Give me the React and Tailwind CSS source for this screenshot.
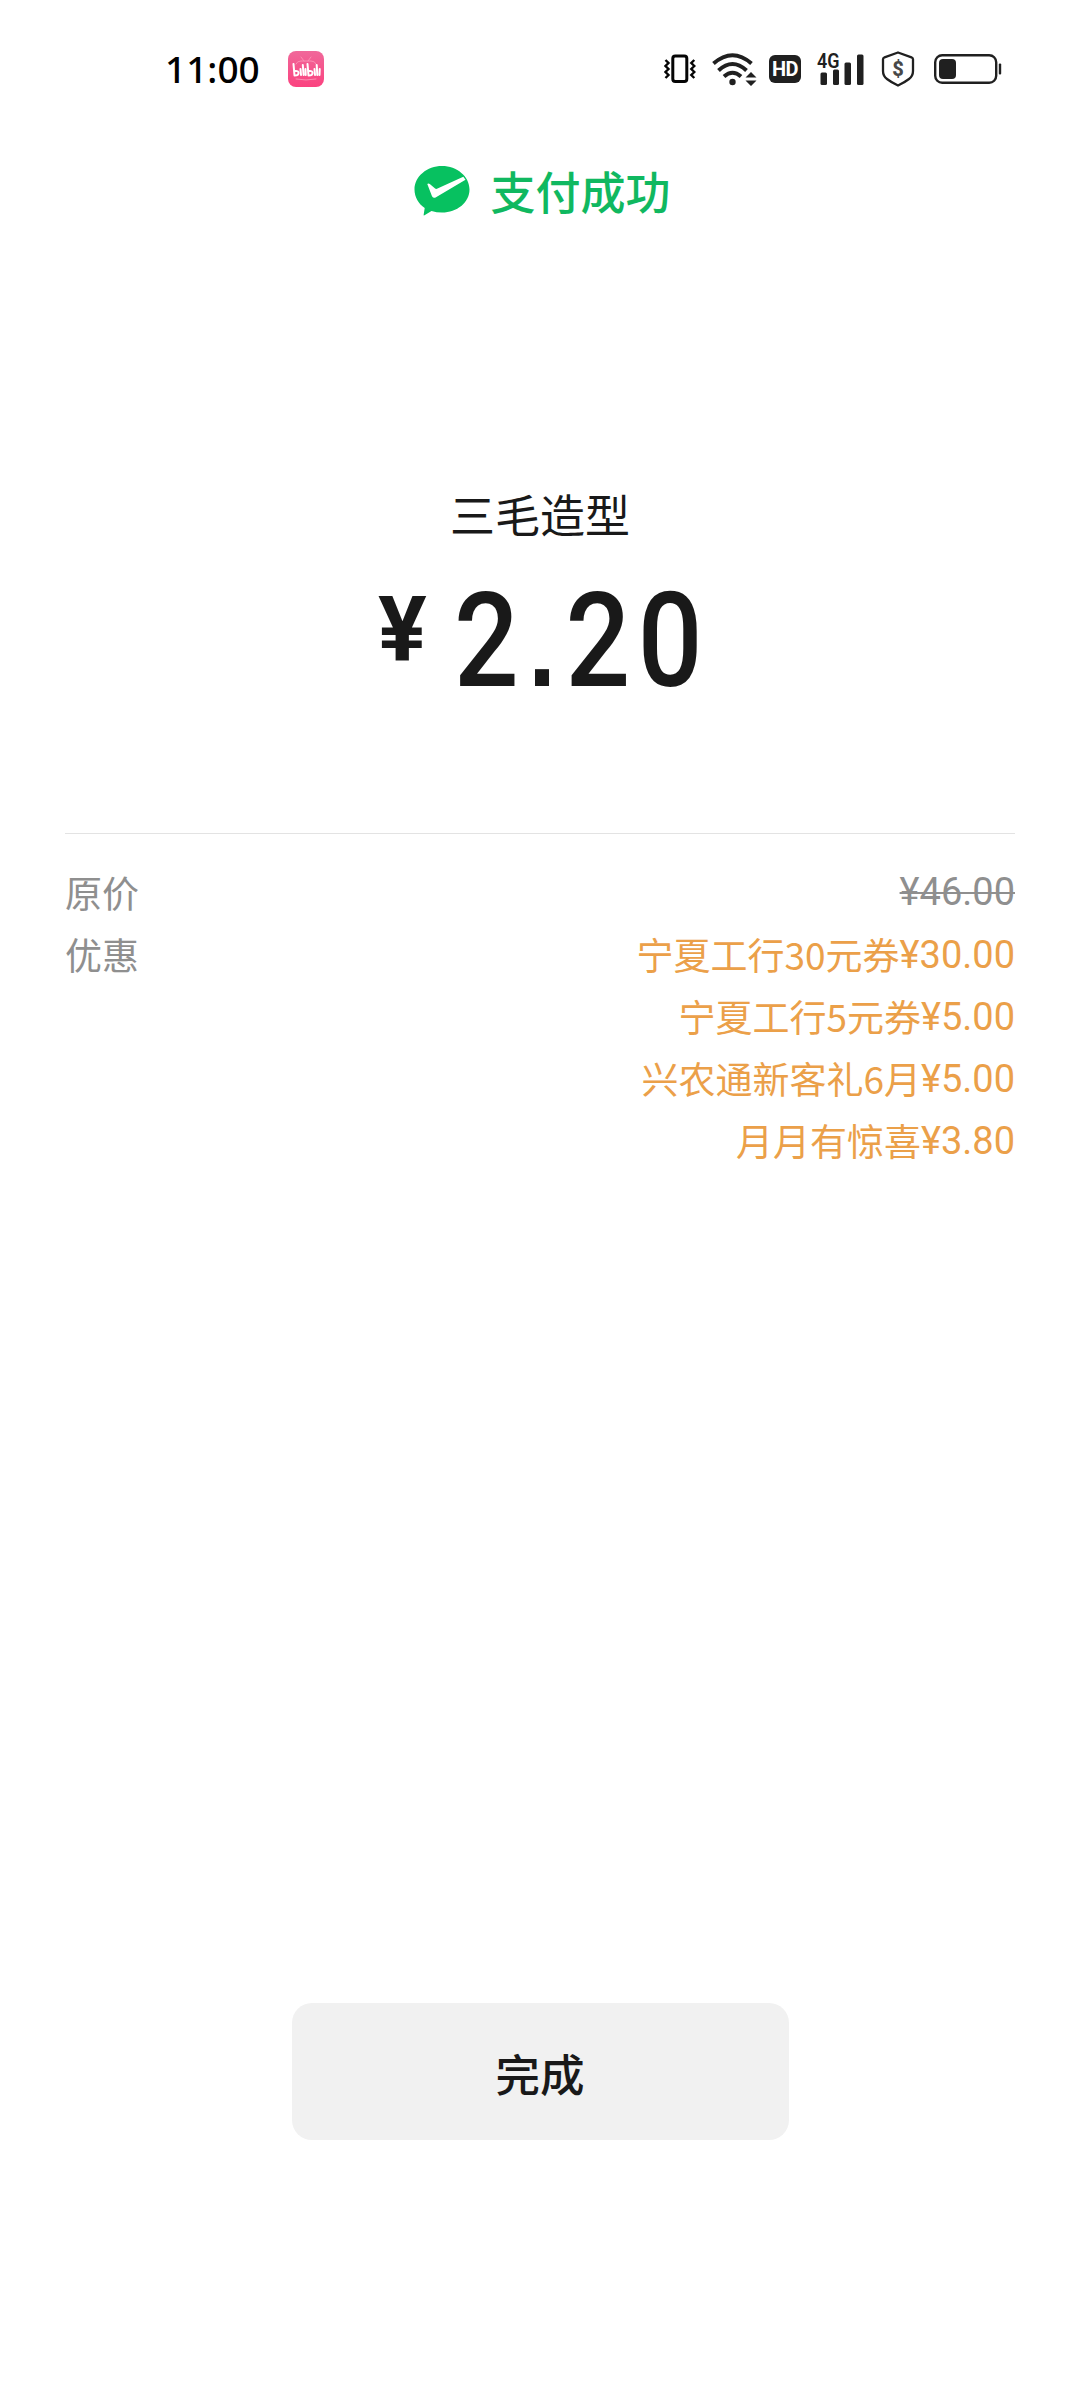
import { Fragment } from "react";

const discounts = [
    { name: "宁夏工行30元券", amount: "30.00" },
    { name: "宁夏工行5元券", amount: "5.00" },
    { name: "兴农通新客礼6月", amount: "5.00" },
    { name: "月月有惊喜", amount: "3.80" },
];

function BiliIcon() {
    return (
        <svg width="36" height="36" viewBox="0 0 36 36" className="ml-[28px]">
            <defs>
                <linearGradient id="bili" x1="0" y1="0" x2="0" y2="1">
                    <stop offset="0" stopColor="#f0689a" />
                    <stop offset="1" stopColor="#fb427f" />
                </linearGradient>
            </defs>
            <rect width="36" height="36" rx="8" fill="url(#bili)" />
            <g fill="none" stroke="#fb8db2" strokeWidth="1" strokeLinecap="round">
                <path d="M13 6l3 4M23 6l-3 4M8 13q1-3 5-3h10q4 0 5 3M8 28q10 2 20 0" />
            </g>
            {/* logo lettering */}
            <g fill="none" stroke="#fff" strokeWidth="2" strokeLinecap="round" strokeLinejoin="round">
                <path d="M5.500 13l1 11.500q4 0 4-2.500t-3.500-2M12.500 18l.5 6M14.800 14l.8 10M17.500 18l.2 6" />
                <path d="M19.500 13l1 11.500q4 0 4-2.500t-3.500-2M26.500 18l.5 6M28.700 14l.6 10M31.700 18l-.2 6" />
            </g>
        </svg>
    );
}

function VibrateIcon() {
    return (
        <svg width="32" height="30" viewBox="0 0 32 30" fill="none" stroke="#050505">
            <rect x="8.800" y="2" width="14" height="25.500" rx="2.500" strokeWidth="3" />
            <path d="M1.500 6l3 3-3 3 3 3-3 3 3 3-3 3" strokeWidth="2.400" />
            <path d="M30.300 6l-3 3 3 3-3 3 3 3-3 3 3 3" strokeWidth="2.400" />
        </svg>
    );
}

function WifiIcon() {
    return (
        <svg width="46" height="34" viewBox="0 0 46 34" className="ml-4">
            <g fill="none" stroke="#202020" strokeWidth="4">
                <path d="M1.500 11.500Q20.500-5 39.500 11.500" />
                <path d="M6.500 18.500Q20.500 5.500 34.500 18.500" />
                <path d="M12 24.500Q20.500 17 29 24.500" />
            </g>
            <circle cx="20.500" cy="30" r="3.200" fill="#202020" />
            <path d="M33.500 25.500l5.500-5.500 5.500 5.500zM33.500 28.500l5.500 5.500 5.500-5.500z" fill="#202020" />
        </svg>
    );
}

function SignalIcon() {
    return (
        <svg width="47" height="34" viewBox="0 0 47 34" className="ml-4 overflow-visible" fill="#202020">
            <text x="0" y="16" fontFamily="Roboto, sans-serif" fontSize="20.500" fontWeight="600" textLength="22.500" lengthAdjust="spacingAndGlyphs">4G</text>
            <rect x="3.500" y="20.500" width="6.500" height="12.500" rx="1.500" />
            <rect x="16" y="17.500" width="6" height="15.500" rx="1.500" />
            <rect x="27.500" y="10.500" width="6.500" height="22.500" rx="1.500" />
            <rect x="40" y="2.500" width="6.500" height="30.500" rx="1.500" />
        </svg>
    );
}

function ShieldIcon() {
    return (
        <svg width="34" height="36" viewBox="0 0 34 36" className="ml-[17px]">
            <path d="M17 1.500l13.500 4.800q1.500.5 1.500 2V20q0 5-4 8-4.500 3.500-11 6.500-6.500-3-11-6.500-4-3-4-8V8.300q0-1.500 1.500-2z" fill="none" stroke="#202020" strokeWidth="2.300" strokeLinejoin="round" />
            <text x="17" y="25" textAnchor="middle" fontFamily="Roboto, sans-serif" fontSize="20" fontWeight="800" fill="#484848">$</text>
        </svg>
    );
}

function BatteryIcon() {
    return (
        <svg width="68" height="30" viewBox="0 0 68 30" className="ml-[19px]">
            <rect x="1.200" y="1.200" width="61" height="27.600" rx="7" fill="none" stroke="#202020" strokeWidth="2.400" />
            <rect x="5" y="5" width="17" height="20" rx="4" fill="#202020" />
            <rect x="64.800" y="9.500" width="2.400" height="11" rx="1" fill="#202020" />
        </svg>
    );
}

function StatusBar() {
    return (
        <div className="flex h-[138px] items-center pl-[165px] pr-[78px]">
            <span className="-mt-[2px] font-['Noto_Sans',sans-serif] text-[37px] leading-none font-medium text-black">11:00</span>
            <BiliIcon />
            <div className="ml-auto flex items-center">
                <VibrateIcon />
                <WifiIcon />
                <span className="ml-[11px] flex h-[28px] w-[32px] items-center justify-center rounded-[6px] bg-[#202020] font-['Roboto',sans-serif] text-[20px] font-bold tracking-[-0.5px] text-white">HD</span>
                <SignalIcon />
                <ShieldIcon />
                <BatteryIcon />
            </div>
        </div>
    );
}

function PayLogo() {
    return (
        <svg width="56" height="50" viewBox="0 0 56 50">
            <path d="M28 0C43 0 55.500 10.500 55.500 23.500S43 46.500 28 46.500q-5.500 0-10.500-1.500l-7 4.300q-1.200.5-.8-.8l1-6.500C4.500 38 .5 31 .5 23.500.5 10.500 13 0 28 0z" fill="#07c160" />
            <path d="M13.300 18q1-1.200 2.500 0l5 4.300q1.200 1 2.700.3L49.300 10.700l2.200 3L22 31.300q-2.500 1.400-4-1z" fill="#fff" />
        </svg>
    );
}

export default function App() {
    return (
        <div className="flex h-[2400px] w-[1080px] flex-col bg-white font-['Noto_Sans_CJK_SC',sans-serif]">
            <StatusBar />

            <div className="mt-[21px] flex h-[64px] items-center justify-center pl-[5px]">
                <PayLogo />
                <span className="ml-[20px] text-[45px] leading-[64px] font-medium text-[#10b860]">支付成功</span>
            </div>

            <div className="mt-[259px] text-center text-[45px] leading-[64px] text-[#191919]">三毛造型</div>

            <div className="mt-[25px] flex h-[140px] items-start pl-[378px] font-['Roboto',sans-serif] font-medium text-[#191919]">
                <span className="mt-[9px] w-[76px] text-[91px] leading-[100px] font-bold">¥</span>
                <span className="origin-left scale-x-[0.87] text-[131px] leading-[140px] font-[540] tracking-[8.600px]">
                    2
                    <span className="inline-block w-[45px] text-center font-['Liberation_Sans',sans-serif] text-[114px] leading-none font-bold">.</span>
                    20
                </span>
            </div>

            <div className="mx-[65px] mt-[122px] border-t-[1px] border-[#e3e3e3] pt-[27px] text-[37px] leading-[62px]">
                <div className="grid grid-cols-[auto_1fr]">
                    <span className="text-[#8f8f8f]">原价</span>
                    <span className="text-right font-['Roboto',sans-serif] text-[38px] text-[#8f8f8f] line-through decoration-2">¥46.00</span>
                    {discounts.map((item, index) => (
                        <Fragment key={item.name}>
                            <span className="text-[#8f8f8f]">{index === 0 ? "优惠" : ""}</span>
                            <span className="flex h-[62px] justify-end text-[#eba049]">
                                {item.name}
                                <span className="pt-px font-['Roboto',sans-serif] text-[38px] font-[450]">¥{item.amount}</span>
                            </span>
                        </Fragment>
                    ))}
                </div>
            </div>

            <button className="mt-auto mb-[260px] h-[137px] w-[497px] self-center rounded-[20px] bg-[#f1f1f1] pt-[3px] text-[44.500px] font-medium text-[#191919]">
                完成
            </button>
        </div>
    );
}
